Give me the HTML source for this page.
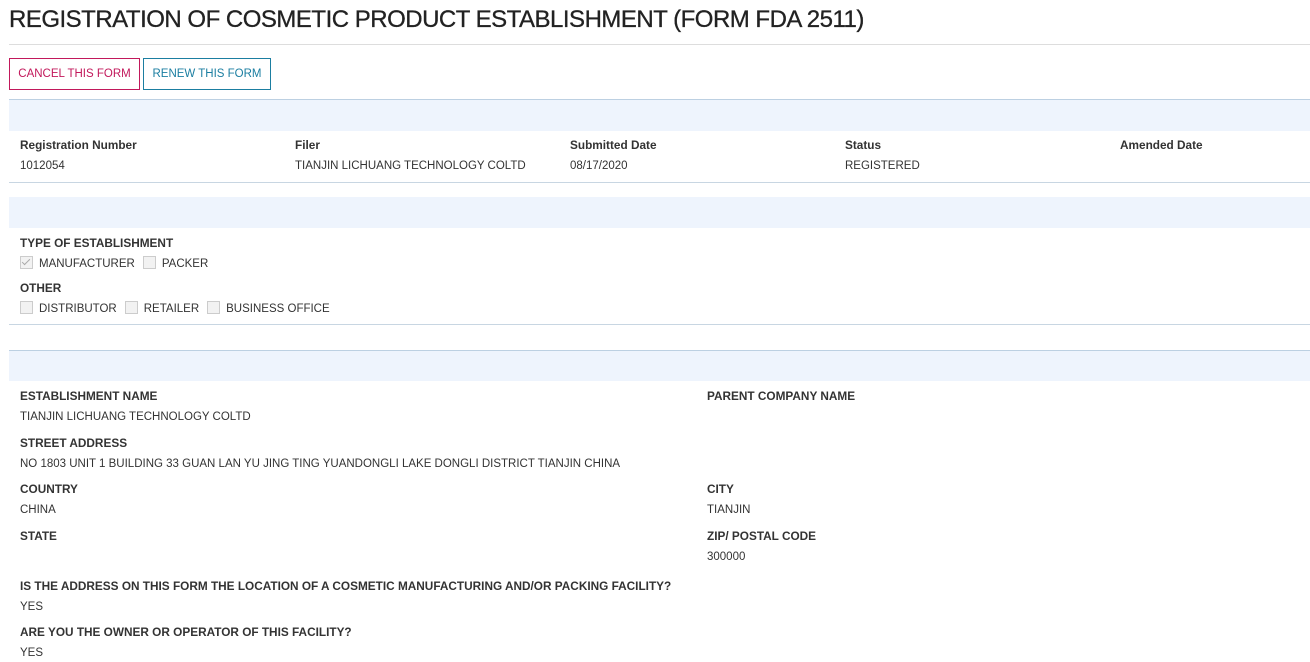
<!DOCTYPE html>
<html><head><meta charset="utf-8"><style>
body{margin:0;width:1310px;height:662px;overflow:hidden;background:#fff;font-family:"Liberation Sans",sans-serif;color:#333;position:relative}
.a{position:absolute;white-space:nowrap;font-size:11.5px;line-height:14px}
.b{font-weight:bold;color:#333;font-size:11.8px}
h1{position:absolute;left:9px;top:5px;margin:0;font-size:24px;font-weight:normal;color:#222;line-height:30px;white-space:nowrap;letter-spacing:-0.5px;-webkit-text-stroke:0.3px #222}
.line{position:absolute;left:9px;right:0;height:1px}
.band{position:absolute;left:9px;right:0;background:#eef4fd}
.btn{position:absolute;top:58px;line-height:30px;font-size:11.5px;text-align:center;box-sizing:border-box;height:32px}
.cb{display:inline-block;width:11px;height:11px;border:1px solid #ccc;background:#f2f2f2;vertical-align:-2px;margin-right:6px;position:relative}
.cb.k::after{content:"";position:absolute;left:3px;top:0px;width:3px;height:7px;border:solid #aaa;border-width:0 1.5px 1.5px 0;transform:rotate(45deg)}
.g{margin-right:8px}
</style></head><body>
<h1>REGISTRATION OF COSMETIC PRODUCT ESTABLISHMENT (FORM FDA 2511)</h1>
<div class="line" style="top:44px;background:#ddd"></div>
<div class="btn" style="left:9px;width:131px;border:1px solid #c2185b;color:#c2185b">CANCEL THIS FORM</div>
<div class="btn" style="left:143px;width:128px;border:1px solid #1b7ea1;color:#1b7ea1">RENEW THIS FORM</div>

<div class="line" style="top:99px;background:#bcd0e2"></div>
<div class="band" style="top:100px;height:31px"></div>
<div class="a b" style="left:20px;top:138px">Registration Number</div>
<div class="a b" style="left:295px;top:138px">Filer</div>
<div class="a b" style="left:570px;top:138px">Submitted Date</div>
<div class="a b" style="left:845px;top:138px">Status</div>
<div class="a b" style="left:1120px;top:138px">Amended Date</div>
<div class="a" style="left:20px;top:159px">1012054</div>
<div class="a" style="left:295px;top:159px">TIANJIN LICHUANG TECHNOLOGY COLTD</div>
<div class="a" style="left:570px;top:159px">08/17/2020</div>
<div class="a" style="left:845px;top:159px">REGISTERED</div>
<div class="line" style="top:182px;background:#c8d6e2"></div>

<div class="band" style="top:197px;height:31px"></div>
<div class="a b" style="left:20px;top:236px">TYPE OF ESTABLISHMENT</div>
<div class="a" style="left:20px;top:256px"><span class="cb k"></span><span class="g">MANUFACTURER</span><span class="cb"></span>PACKER</div>
<div class="a b" style="left:20px;top:281px">OTHER</div>
<div class="a" style="left:20px;top:301px"><span class="cb"></span><span class="g">DISTRIBUTOR</span><span class="cb"></span><span class="g">RETAILER</span><span class="cb"></span>BUSINESS OFFICE</div>
<div class="line" style="top:324px;background:#c8d6e2"></div>

<div class="line" style="top:350px;background:#bcd0e2"></div>
<div class="band" style="top:351px;height:30px"></div>
<div class="a b" style="left:20px;top:389px">ESTABLISHMENT NAME</div>
<div class="a b" style="left:707px;top:389px">PARENT COMPANY NAME</div>
<div class="a" style="left:20px;top:410px">TIANJIN LICHUANG TECHNOLOGY COLTD</div>
<div class="a b" style="left:20px;top:436px">STREET ADDRESS</div>
<div class="a" style="left:20px;top:457px">NO 1803 UNIT 1 BUILDING 33 GUAN LAN YU JING TING YUANDONGLI LAKE DONGLI DISTRICT TIANJIN CHINA</div>
<div class="a b" style="left:20px;top:482px">COUNTRY</div>
<div class="a b" style="left:707px;top:482px">CITY</div>
<div class="a" style="left:20px;top:503px">CHINA</div>
<div class="a" style="left:707px;top:503px">TIANJIN</div>
<div class="a b" style="left:20px;top:529px">STATE</div>
<div class="a b" style="left:707px;top:529px">ZIP/ POSTAL CODE</div>
<div class="a" style="left:707px;top:550px">300000</div>
<div class="a b" style="left:20px;top:579px">IS THE ADDRESS ON THIS FORM THE LOCATION OF A COSMETIC MANUFACTURING AND/OR PACKING FACILITY?</div>
<div class="a" style="left:20px;top:600px">YES</div>
<div class="a b" style="left:20px;top:625px">ARE YOU THE OWNER OR OPERATOR OF THIS FACILITY?</div>
<div class="a" style="left:20px;top:646px">YES</div>
</body></html>
